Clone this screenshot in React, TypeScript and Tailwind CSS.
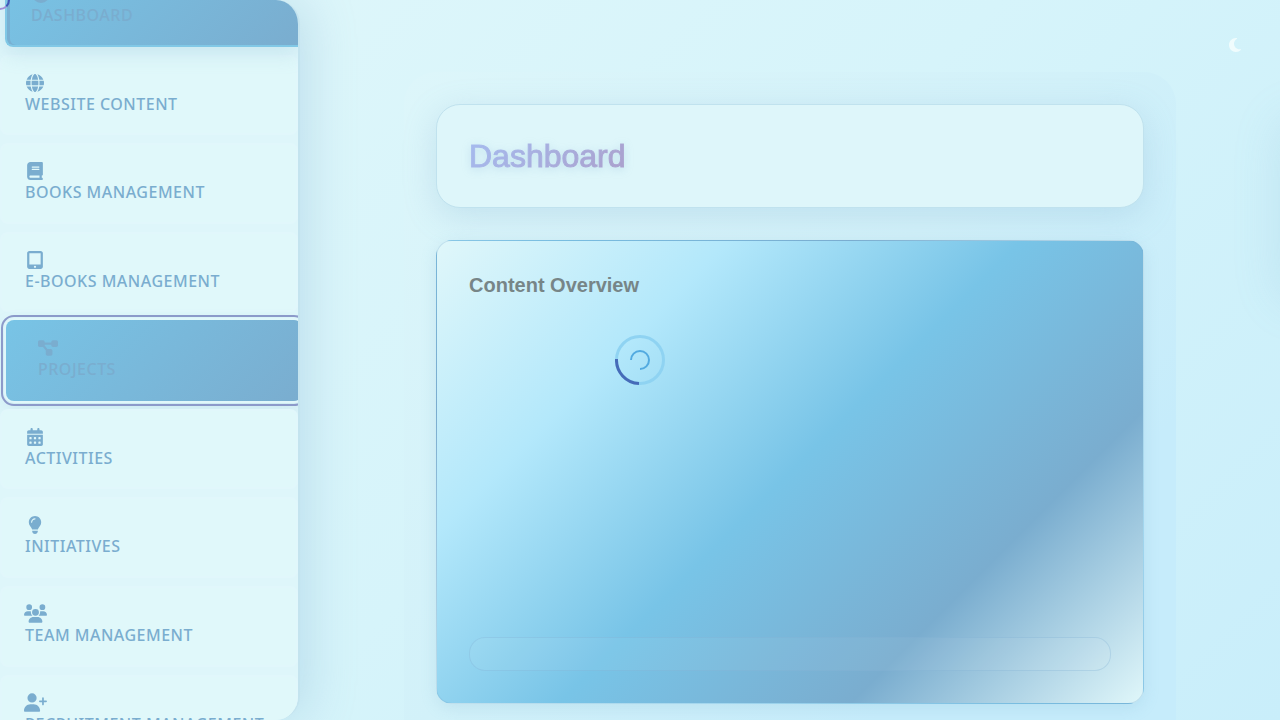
import type { IconType } from "react-icons";
import {
  FaBook,
  FaCalendarDays,
  FaDiagramProject,
  FaGauge,
  FaGlobe,
  FaLightbulb,
  FaMoon,
  FaTabletScreenButton,
  FaUserPlus,
  FaUsers,
} from "react-icons/fa6";

type Item = { label: string; icon: IconType; size?: string; state?: "active" | "focused" };

const items: Item[] = [
  { label: "Dashboard", icon: FaGauge, state: "active" },
  { label: "Website Content", icon: FaGlobe },
  { label: "Books Management", icon: FaBook },
  { label: "E-Books Management", icon: FaTabletScreenButton },
  { label: "Projects", icon: FaDiagramProject, size: "size-5", state: "focused" },
  { label: "Activities", icon: FaCalendarDays },
  { label: "Initiatives", icon: FaLightbulb },
  { label: "Team Management", icon: FaUsers, size: "size-[23px]" },
  { label: "Recruitment Management", icon: FaUserPlus, size: "size-[23px]" },
];

const itemStyles = {
  idle: "border-2 border-[#e1f7fb] bg-[#e0f8fa] pl-[23px]",
  active:
    "relative ml-[5px] rounded-r-none border-2 border-r-0 border-[#81c8e6] bg-[linear-gradient(135deg,#78c4e6,#7aadcf)] pl-6 shadow-[inset_3px_0_0_#78b0d2,0_8px_20px_rgba(122,173,207,0.2)]",
  focused:
    "ml-[6px] -mr-1 border-2 border-transparent bg-[linear-gradient(135deg,#78c4e6,#7aadcf)] bg-origin-border pl-[30px] outline-2 outline-offset-3 outline-[#8c9aca] ring-2 ring-[#e0f7fa] shadow-[0_8px_20px_rgba(122,173,207,0.2)]",
};

function Sidebar() {
  return (
    <aside className="h-screen w-[300px] shrink-0 overflow-hidden rounded-r-[24px] border-r-2 border-[#c4e4ef] bg-[#def6fa] shadow-[8px_0_48px_rgba(122,173,207,0.3)]">
      <nav className="-mt-[34px]">
        <ul className="flex h-[789px] flex-col gap-2">
          {items.map(({ label, icon: Icon, size, state }) => (
            <li key={label} className="flex-1">
              <a
                href="#"
                className={`flex h-full flex-col rounded-lg pt-4 font-['Noto_Sans'] text-base leading-[22px] font-medium tracking-[0.5px] text-[#7aadcf] uppercase ${itemStyles[state ?? "idle"]}`}
              >
                <span className="flex h-5 w-5 items-center justify-center">
                  <Icon className={`shrink-0 ${size ?? "size-[18px]"}`} />
                </span>
                {label}
              </a>
            </li>
          ))}
        </ul>
      </nav>
    </aside>
  );
}

function Spinner() {
  return (
    <svg viewBox="0 0 50 50" className="size-[50px]" fill="none" role="status" aria-label="Loading">
      <circle cx="25" cy="25" r="23.5" stroke="#8fd3f2" strokeWidth="3" />
      <path d="M1.5 24A23.5 23.5 0 0 0 24 48.5" stroke="#466bb8" strokeWidth="3" />
      <path d="M16 25A9 9 0 1 1 25 34" stroke="#52aae0" strokeWidth="2" />
    </svg>
  );
}

export default function App() {
  return (
    <div className="relative flex h-screen overflow-hidden bg-[linear-gradient(135deg,#e0f7fa,#d6f4fa_50%,#c9eefa)] font-['Liberation_Sans',sans-serif]">
      <Sidebar />
      <div className="absolute -top-[10px] -left-[10px] size-5 rounded-full border-2 border-[#a08fd8] border-r-[#4056b8]" />
      <main className="min-w-0 flex-1 pt-[72px] pr-[104px] pl-[104px]">
        <div className="min-h-screen rounded-[32px] bg-[linear-gradient(135deg,#ddf6fa,#d2f1f9_45%,#c6ecfb_75%)] p-8">
          <header className="rounded-3xl border border-[#c0e2ee] bg-[#def6fa] px-8 py-[27px] shadow-[0_8px_32px_rgba(122,173,207,0.25)]">
            <h1 className="w-fit bg-[linear-gradient(135deg,#a5bcf0,#ab9fcb)] bg-clip-text text-[32px] leading-[48px] font-normal text-transparent drop-shadow-[0_2px_4px_rgba(122,173,207,0.3)] [-webkit-text-stroke:1px_transparent]">
              Dashboard
            </h1>
          </header>
          <section className="mt-8 flex h-[464px] flex-col rounded-2xl border border-[#7aadcf]/30 bg-[linear-gradient(135deg,#e0f7fa_0%,#b3e8fb_25%,#78c4e7_50%,#7aadcf_75%,#e0f7fa_100%)] p-8 shadow-[0_4px_16px_rgba(122,173,207,0.2)]">
            <h2 className="text-xl leading-6 font-bold text-[#778587]">Content Overview</h2>
            <div className="mt-auto h-[34px] rounded-2xl border border-[#7aadcf]/30 bg-white/5" />
          </section>
        </div>
      </main>
      <div className="pointer-events-none absolute inset-0 flex items-center justify-center">
        <Spinner />
      </div>
      <button type="button" aria-label="Toggle dark mode" className="absolute top-[37px] right-[37px] flex size-4 items-center justify-center text-[#f0fcfd]">
        <FaMoon className="size-4" />
      </button>
      <div className="pointer-events-none absolute top-[120px] -right-[60px] h-[180px] w-[60px] rounded-2xl shadow-[0_0_48px_rgba(122,173,207,0.2)]" />
    </div>
  );
}
